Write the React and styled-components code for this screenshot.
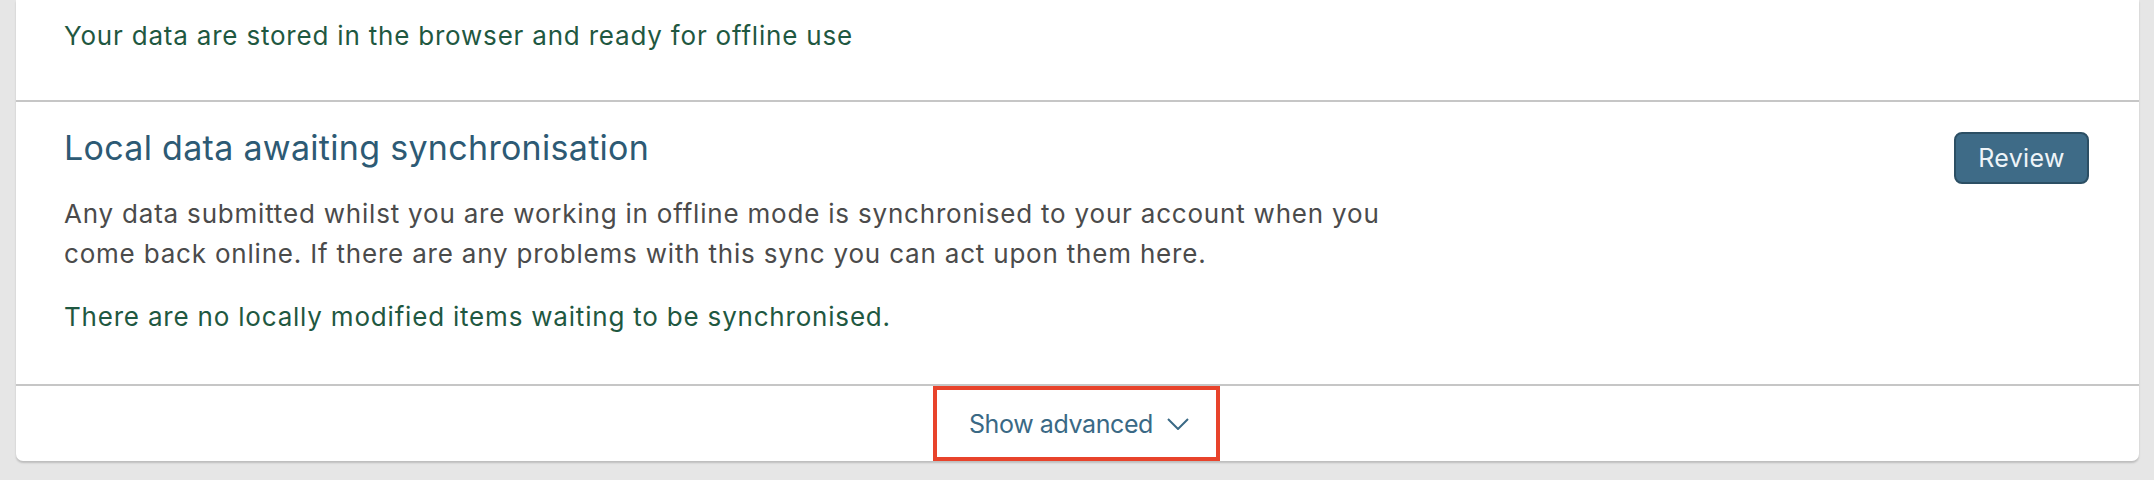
import React, { useState } from "react";
import styled, { createGlobalStyle } from "styled-components";

const GlobalStyle = createGlobalStyle`
  html, body {
    margin: 0;
    padding: 0;
    background: #e6e6e6;
    font-family: Inter, "Liberation Sans", sans-serif;
  }
`;

export default function App() {
  const [showAdvanced, setShowAdvanced] = useState(false);

  return (
    <>
      <GlobalStyle />
      <Page>
        <Card>
          <Section $pad="16px 50px 44px 48px">
            <StatusText>
              Your data are stored in the browser and ready for offline use
            </StatusText>
          </Section>

          <Section $pad="24px 50px 47px 48px">
            <SectionHead>
              <div>
                <Heading>Local data awaiting synchronisation</Heading>
                <BodyText>
                  Any data submitted whilst you are working in offline mode is
                  synchronised to your account when you come back online. If
                  there are any problems with this sync you can act upon them
                  here.
                </BodyText>
                <StatusText $spaced>
                  There are no locally modified items waiting to be
                  synchronised.
                </StatusText>
              </div>
              <ReviewButton type="button">Review</ReviewButton>
            </SectionHead>
          </Section>

          <Footer>
            <ToggleButton
              type="button"
              onClick={() => setShowAdvanced(!showAdvanced)}
            >
              Show advanced
              <Chevron $open={showAdvanced} viewBox="0 0 22 12">
                <path d="M1 1 L11 11 L21 1" />
              </Chevron>
            </ToggleButton>
          </Footer>
        </Card>
      </Page>
    </>
  );
}

const Page = styled.div`
  padding: 0 15px 19px 16px;
`;

const Card = styled.div`
  background: #fff;
  border-radius: 0 0 7px 7px;
  box-shadow: 0 2px 2px rgba(0, 0, 0, 0.18);
`;

const Section = styled.section`
  padding: ${(p) => p.$pad};
  border-bottom: 2px solid #c6c6c6;
`;

const SectionHead = styled.div`
  display: flex;
  justify-content: space-between;
  align-items: flex-start;
`;

const Heading = styled.h2`
  margin: 0;
  font-size: 34px;
  line-height: 44px;
  font-weight: 400;
  letter-spacing: 0.3px;
  color: #2d5a74;
`;

const BodyText = styled.p`
  margin: 24px 0 0;
  max-width: 1360px;
  font-size: 26px;
  line-height: 40px;
  letter-spacing: 0.8px;
  color: #4b4b4b;
`;

const StatusText = styled.p`
  margin: ${(p) => (p.$spaced ? "23px 0 0" : "0")};
  font-size: 26px;
  line-height: 40px;
  letter-spacing: 0.8px;
  color: #1f5841;
`;

const ReviewButton = styled.button`
  margin-top: 6px;
  width: 135px;
  height: 52px;
  border: 2px solid #2c4f64;
  border-radius: 8px;
  background: #3e6b87;
  color: #eef4f8;
  font-family: inherit;
  font-size: 25px;
  letter-spacing: 0.3px;
  cursor: pointer;
`;

const Footer = styled.div`
  display: flex;
  justify-content: center;
`;

const ToggleButton = styled.button`
  display: flex;
  align-items: center;
  gap: 14px;
  height: 75px;
  padding: 0 27px 0 32px;
  margin-left: -2px;
  border: 4px solid #e8432b;
  background: #fff;
  color: #3a6985;
  font-family: inherit;
  font-size: 25px;
  letter-spacing: -0.4px;
  cursor: pointer;
`;

const Chevron = styled.svg`
  width: 22px;
  height: 12px;
  fill: none;
  stroke: #3a6985;
  stroke-width: 2;
  transform: ${(p) => (p.$open ? "rotate(180deg)" : "none")};
`;
